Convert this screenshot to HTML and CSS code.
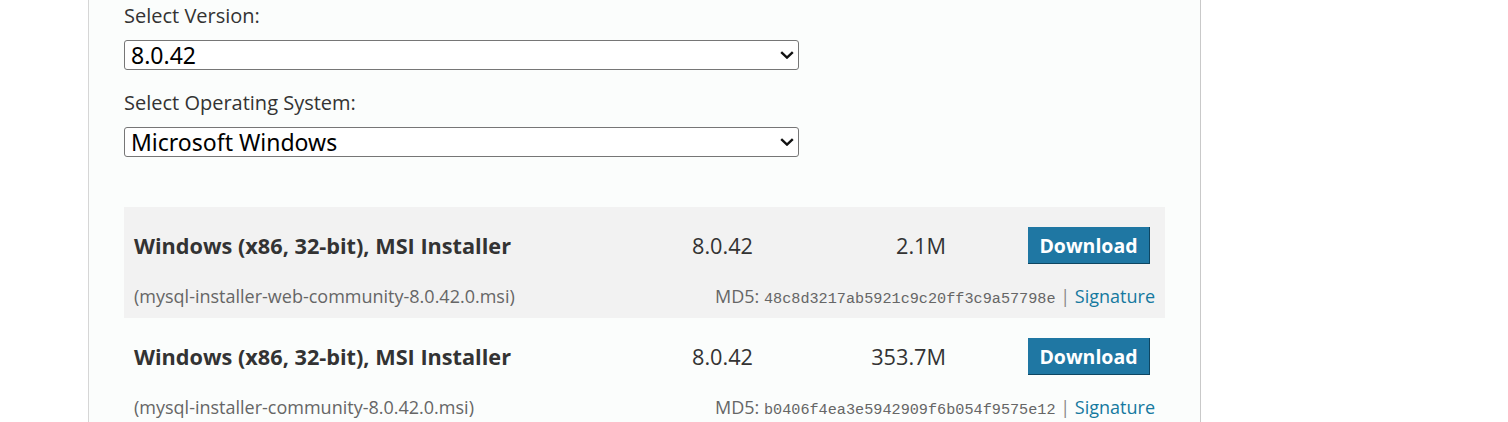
FILE: index.html
```html
<!DOCTYPE html>
<html lang="en">
<head>
<meta charset="utf-8">
<title>MySQL Installer Downloads</title>
<link rel="stylesheet" href="styles.css">
</head>
<body>
<div class="page">
  <main class="content">
    <div class="field">
      <label class="field-label" for="ver">Select Version:</label>
      <div class="select-wrap">
        <select id="ver" class="field-select"><option>8.0.42</option></select>
        <svg class="chevron" width="14" height="8" viewBox="0 0 14 8" aria-hidden="true"><path d="M1.2 1.2 L7 6.6 L12.8 1.2" fill="none" stroke="#111" stroke-width="2.4"/></svg>
      </div>
    </div>
    <div class="field">
      <label class="field-label" for="os">Select Operating System:</label>
      <div class="select-wrap">
        <select id="os" class="field-select"><option>Microsoft Windows</option></select>
        <svg class="chevron" width="14" height="8" viewBox="0 0 14 8" aria-hidden="true"><path d="M1.2 1.2 L7 6.6 L12.8 1.2" fill="none" stroke="#111" stroke-width="2.4"/></svg>
      </div>
    </div>
    <div class="downloads">
      <div class="dl-row dl-row-shaded">
        <div class="dl-main">
          <div class="dl-title">Windows (x86, 32-bit), MSI Installer</div>
          <div class="dl-version">8.0.42</div>
          <div class="dl-size">2.1M</div>
          <div class="dl-action"><a class="btn-download" href="#">Download</a></div>
        </div>
        <div class="dl-sub">
          <div class="dl-file">(mysql-installer-web-community-8.0.42.0.msi)</div>
          <div class="dl-md5">MD5: <code class="hash">48c8d3217ab5921c9c20ff3c9a57798e</code> <span class="sep">|</span> <a class="sig" href="#">Signature</a></div>
        </div>
      </div>
      <div class="dl-row">
        <div class="dl-main">
          <div class="dl-title">Windows (x86, 32-bit), MSI Installer</div>
          <div class="dl-version">8.0.42</div>
          <div class="dl-size">353.7M</div>
          <div class="dl-action"><a class="btn-download" href="#">Download</a></div>
        </div>
        <div class="dl-sub">
          <div class="dl-file">(mysql-installer-community-8.0.42.0.msi)</div>
          <div class="dl-md5">MD5: <code class="hash">b0406f4ea3e5942909f6b054f9575e12</code> <span class="sep">|</span> <a class="sig" href="#">Signature</a></div>
        </div>
      </div>
    </div>
  </main>
</div>
</body>
</html>
```

FILE: styles.css
```css
html, body {
  margin: 0;
  padding: 0;
  background: #ffffff;
  font-family: "Open Sans", "Noto Sans", "Liberation Sans", sans-serif;
  color: #333333;
}

.page {
  padding-left: 88px;
  height: 422px;
  overflow: hidden;
}

.content {
  width: 1113px;
  min-height: 422px;
  background: #fbfdfc;
  border-left: 1px solid #d6d6d6;
  border-right: 1px solid #c9c9c9;
  padding: 4px 0 0 35px;
  box-sizing: border-box;
}

.field {
  display: flex;
  flex-direction: column;
  align-items: flex-start;
}

.field + .field {
  margin-top: 21px;
}

.field-label {
  font-size: 20px;
  line-height: 24px;
  color: #333333;
  margin-bottom: 12px;
}

.select-wrap {
  position: relative;
  width: 675px;
  height: 30px;
}

.field-select {
  appearance: none;
  -webkit-appearance: none;
  display: block;
  width: 675px;
  height: 30px;
  box-sizing: border-box;
  font-family: "Noto Sans", "Open Sans", sans-serif;
  font-size: 23px;
  line-height: 28px;
  color: #000000;
  background: #ffffff;
  border: 1px solid #767676;
  border-radius: 3px;
  padding: 0 30px 0 6px;
  margin: 0;
}

.chevron {
  position: absolute;
  right: 5px;
  top: 11px;
  pointer-events: none;
}

.downloads {
  margin-top: 50px;
  width: 1041px;
}

.dl-row {
  padding: 20px 15px 10px 10px;
}

.dl-row-shaded {
  background: #f2f2f2;
}

.dl-main {
  display: grid;
  grid-template-columns: 558px 120px 134px 1fr;
  align-items: center;
  height: 37px;
  font-size: 21.7px;
}

.dl-title {
  font-weight: 700;
  color: #333333;
}

.dl-version {
  color: #333333;
}

.dl-size {
  text-align: right;
  color: #333333;
}

.dl-action {
  justify-self: end;
}

.btn-download {
  display: block;
  width: 122px;
  height: 37px;
  box-sizing: border-box;
  background: #1f77a3;
  border-right: 1px solid #0e4662;
  border-bottom: 1px solid #0e4662;
  color: #ffffff;
  font-size: 19.5px;
  font-weight: 700;
  line-height: 37px;
  text-align: center;
  text-decoration: none;
}

.dl-sub {
  display: flex;
  justify-content: space-between;
  align-items: center;
  margin-top: 20px;
  margin-right: -5px;
  height: 24px;
  font-size: 18px;
  color: #666666;
}

.hash {
  font-family: "Liberation Mono", "DejaVu Sans Mono", monospace;
  font-size: 15.2px;
  color: #666666;
}

.sep {
  color: #888888;
  margin: 0;
}

.sig {
  color: #15799f;
  text-decoration: none;
}
```
